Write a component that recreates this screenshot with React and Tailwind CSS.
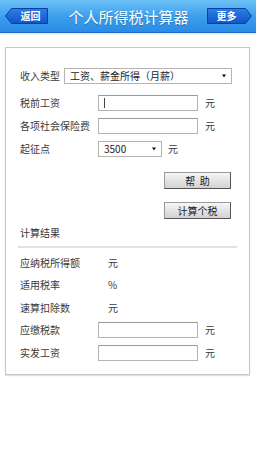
import React from 'react';

const font = { fontFamily: '"Noto Sans CJK SC", "Noto Sans", sans-serif' };

// Arrow-shaped nav button drawn as svg behind the label
const NavButton = ({ dir, children }) => {
  const points =
    dir === 'left'
      ? '0.5,8 6.5,0.5 42.5,0.5 42.5,15.5 6.5,15.5'
      : '0.5,0.5 38.5,0.5 44.5,8 38.5,15.5 0.5,15.5';
  return (
    <button className="relative w-[45px] h-[16px] flex items-center justify-center">
      <svg className="absolute inset-0" width="45" height="16" viewBox="0 0 45 16">
        <defs>
          <linearGradient id={`g-${dir}`} x1="0" y1="0" x2="0" y2="1">
            <stop offset="0" stopColor="#2b7fe6" />
            <stop offset="1" stopColor="#0f55cc" />
          </linearGradient>
        </defs>
        <polygon points={points} fill={`url(#g-${dir})`} stroke="#0b3f9e" strokeWidth="1" strokeLinejoin="round" />
      </svg>
      <span className={`relative text-[10px] leading-none text-white font-bold ${dir === 'left' ? 'pl-[6px]' : 'pr-[6px]'}`}>
        {children}
      </span>
    </button>
  );
};

const TextBox = ({ cursor }) => (
  <div className="w-[100px] h-[16px] border border-[#b4b4b4] border-t-[#9a9a9a] bg-white flex items-center pl-[5px]">
    {cursor && <span className="w-px h-[10px] bg-[#444]" />}
  </div>
);

const Select = ({ value, width }) => (
  <div className={`${width} h-[16px] border border-[#b4b4b4] bg-white flex items-center justify-between pl-[5px] pr-[5px]`}>
    <span className="text-[10px] leading-none text-[#222]">{value}</span>
    <svg width="4" height="4" viewBox="0 0 4 4">
      <polygon points="0,0.5 4,0.5 2,3.5" fill="#111" />
    </svg>
  </div>
);

const GrayButton = ({ children }) => (
  <button className="w-[67px] h-[17px] bg-gradient-to-b from-[#f6f6f6] to-[#d2d2d2] border border-[#9a9a9a] border-r-[#555] border-b-[#555] text-[10px] leading-none text-[#222]">
    {children}
  </button>
);

const Label = ({ w, children }) => (
  <span className={`${w} text-[10px] leading-none text-[#3a3a3a] shrink-0`}>{children}</span>
);

const Unit = ({ ml = 'ml-[7px]', children }) => (
  <span className={`${ml} text-[10px] leading-none text-[#3a3a3a]`}>{children}</span>
);

export default function App() {
  return (
    <div className="w-[256px] h-[455px] bg-white overflow-hidden" style={font}>
      {/* header */}
      <div className="h-[33px] bg-gradient-to-b from-[#6cc2f6] via-[#3d9fee] to-[#2a8be4] border-b border-[#1a6cc4] flex items-center justify-between pl-[5px] pr-[4px] shadow-[0_1px_2px_rgba(0,0,0,0.15)]">
        <NavButton dir="left">返回</NavButton>
        <span className="text-[15px] leading-none text-white [text-shadow:0_1px_1px_rgba(0,0,0,0.25)]">个人所得税计算器</span>
        <NavButton dir="right">更多</NavButton>
      </div>

      {/* form panel */}
      <div className="mx-[5px] mt-[14px] w-[245px] h-[328px] border border-[#c6c6c6] shadow-[0_1px_1px_rgba(0,0,0,0.12)] pl-[14px] pt-[20px] flex flex-col">
        <div className="flex items-center h-[16px]">
          <Label w="w-[44px]">收入类型</Label>
          <Select value="工资、薪金所得（月薪）" width="w-[168px]" />
        </div>
        <div className="flex items-center h-[16px] mt-[11px]">
          <Label w="w-[78px]">税前工资</Label>
          <TextBox cursor />
          <Unit>元</Unit>
        </div>
        <div className="flex items-center h-[16px] mt-[7px]">
          <Label w="w-[78px]">各项社会保险费</Label>
          <TextBox />
          <Unit>元</Unit>
        </div>
        <div className="flex items-center h-[16px] mt-[7px]">
          <Label w="w-[78px]">起征点</Label>
          <Select value="3500" width="w-[64px]" />
          <Unit ml="ml-[6px]">元</Unit>
        </div>
        <div className="flex justify-end pr-[18px] mt-[15px]">
          <GrayButton>帮&nbsp;&nbsp;助</GrayButton>
        </div>
        <div className="flex justify-end pr-[18px] mt-[13px]">
          <GrayButton>计算个税</GrayButton>
        </div>
        <div className="mt-[9px] text-[10px] leading-none text-[#333]">计算结果</div>
        <div className="mt-[8px] mr-[12px] -ml-[2px] h-[2px] bg-[#e2e2e2]" />
        <div className="flex items-center h-[16px] mt-[7px]">
          <Label w="w-[88px]">应纳税所得额</Label>
          <Unit ml="ml-0">元</Unit>
        </div>
        <div className="flex items-center h-[16px] mt-[6px]">
          <Label w="w-[88px]">适用税率</Label>
          <Unit ml="ml-0">%</Unit>
        </div>
        <div className="flex items-center h-[16px] mt-[7px]">
          <Label w="w-[88px]">速算扣除数</Label>
          <Unit ml="ml-0">元</Unit>
        </div>
        <div className="flex items-center h-[16px] mt-[6px]">
          <Label w="w-[78px]">应缴税款</Label>
          <TextBox />
          <Unit>元</Unit>
        </div>
        <div className="flex items-center h-[16px] mt-[7px]">
          <Label w="w-[78px]">实发工资</Label>
          <TextBox />
          <Unit>元</Unit>
        </div>
      </div>
    </div>
  );
}
